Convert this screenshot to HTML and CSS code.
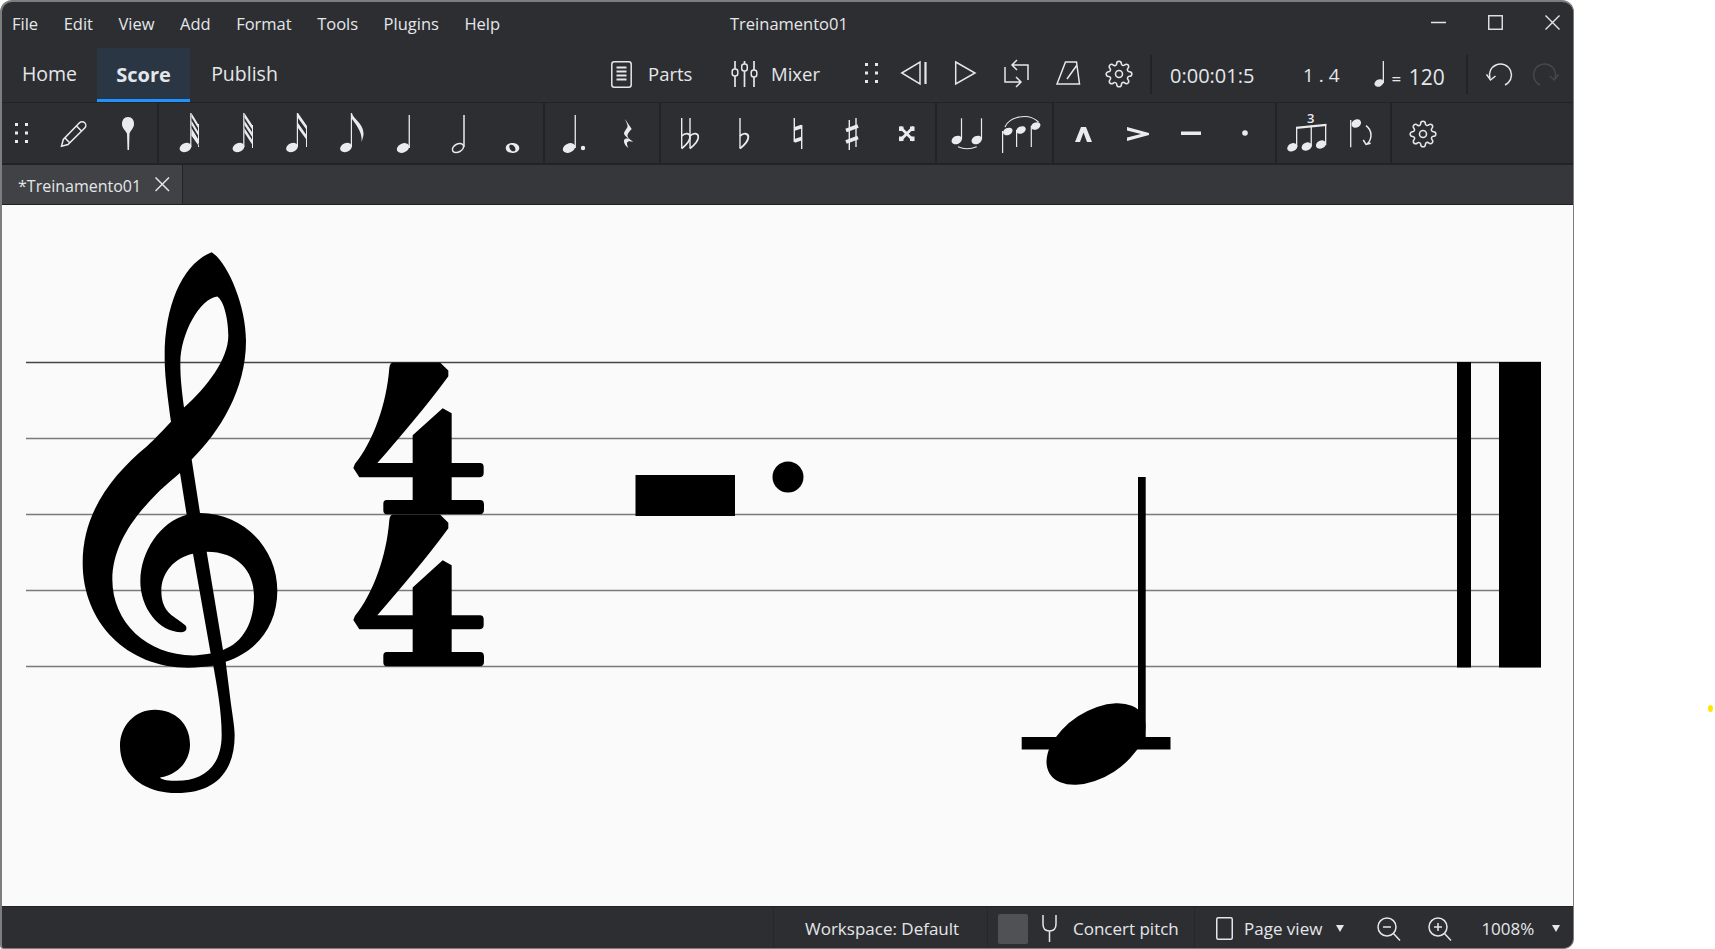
FILE: index.html
```html
<!DOCTYPE html>
<html lang="en">
<head>
<meta charset="utf-8">
<title>Treinamento01</title>
<link rel="stylesheet" href="styles.css">
</head>
<body>
<svg class="sprite" aria-hidden="true">
  <symbol id="gear" viewBox="0 0 24 24"><g fill="none" stroke="currentColor" stroke-width="1.35"><circle cx="12" cy="12" r="3"/><path d="M19.4 15a1.65 1.65 0 0 0 .33 1.82l.06.06a2 2 0 0 1 0 2.83 2 2 0 0 1-2.83 0l-.06-.06a1.65 1.65 0 0 0-1.82-.33 1.65 1.65 0 0 0-1 1.51V21a2 2 0 0 1-2 2 2 2 0 0 1-2-2v-.09A1.65 1.65 0 0 0 9 19.4a1.65 1.65 0 0 0-1.82.33l-.06.06a2 2 0 0 1-2.83 0 2 2 0 0 1 0-2.83l.06-.06a1.65 1.65 0 0 0 .33-1.82 1.65 1.65 0 0 0-1.51-1H3a2 2 0 0 1-2-2 2 2 0 0 1 2-2h.09A1.65 1.65 0 0 0 4.6 9a1.65 1.65 0 0 0-.33-1.82l-.06-.06a2 2 0 0 1 0-2.83 2 2 0 0 1 2.83 0l.06.06a1.65 1.65 0 0 0 1.82.33H9a1.65 1.65 0 0 0 1-1.51V3a2 2 0 0 1 2-2 2 2 0 0 1 2 2v.09a1.65 1.65 0 0 0 1 1.51 1.65 1.65 0 0 0 1.82-.33l.06-.06a2 2 0 0 1 2.83 0 2 2 0 0 1 0 2.83l-.06.06a1.65 1.65 0 0 0-.33 1.82V9a1.65 1.65 0 0 0 1.51 1H21a2 2 0 0 1 2 2 2 2 0 0 1-2 2h-.09a1.65 1.65 0 0 0-1.51 1z"/></g></symbol>
  <symbol id="dots" viewBox="0 0 14 22"><path d="M0 0h3v3H0zM10 0h3v3h-3zM0 8.500h3v3H0zM10 8.500h3v3h-3zM0 17h3v3H0zM10 17h3v3h-3z"/></symbol>
</svg>

<div class="window">
  <header class="titlebar">
    <nav class="menu"><span>File</span><span>Edit</span><span>View</span><span>Add</span><span>Format</span><span>Tools</span><span>Plugins</span><span>Help</span></nav>
    <div class="doc-title">Treinamento01</div>
    <div class="winctl">
      <svg class="winbtn" viewBox="0 0 15 15"><path d="M0 7.500h15" /></svg>
      <svg class="winbtn" viewBox="0 0 15 15"><rect x=".75" y=".75" width="13.500" height="13.500"/></svg>
      <svg class="winbtn" viewBox="0 0 15 15"><path d="M.5 .5l14 14M14.500 .5l-14 14"/></svg>
    </div>
  </header>

  <div class="mainbar">
    <div class="tab">Home</div>
    <div class="tab tab-on">Score</div>
    <div class="tab">Publish</div>
    <div class="mb-right">
      <div class="mb-btn parts">
        <svg class="ln ic-parts" viewBox="0 0 21 27"><rect x=".8" y=".8" width="19.400" height="25.400" rx="2.500"/><path d="M5.500 6.500h10M5.500 10.500h10M5.500 14.500h10M5.500 18.500h10" stroke-width="1.800"/></svg>
        <span>Parts</span>
      </div>
      <div class="mb-btn mixer">
        <svg class="ln ic-mixer" viewBox="0 0 27 26"><path d="M4 0v8M4 15v11M13.500 0v3M13.500 10v16M23 0v9M23 16v10" stroke-width="1.700"/><rect x="1.200" y="8" width="5.600" height="7" rx="2.500"/><rect x="10.700" y="3" width="5.600" height="7" rx="2.500"/><rect x="20.200" y="9" width="5.600" height="7" rx="2.500"/></svg>
        <span>Mixer</span>
      </div>
      <svg class="fl ic-handle" viewBox="0 0 14 22"><use href="#dots"/></svg>
      <svg class="ln cell" viewBox="0 0 51 54"><path d="M12.800 26L31 15v22z"/><path d="M36.500 15v22" stroke-width="2.200"/></svg>
      <svg class="ln cell" viewBox="0 0 51 54"><path d="M15.700 15L35 26 15.700 37z"/></svg>
      <svg class="ln cell" viewBox="0 0 51 54"><path d="M22 18h15v15M26 13l-5 5 5 5M14 20v15h15M25 30l5 5-5 5"/></svg>
      <svg class="ln cell" viewBox="0 0 51 54"><path d="M15 37l8.500-22h11l3 22zM25 32l10-14"/></svg>
      <div class="cell gear-cell"><svg class="ic-gear"><use href="#gear"/></svg></div>
      <i class="vsep sep-a"></i>
      <span class="time">0:00:01:5</span>
      <span class="bar">1 . 4</span>
      <svg class="fl ic-tempo" viewBox="0 0 11 26"><ellipse cx="5" cy="22" rx="4.700" ry="3.500" transform="rotate(-25 5 22)"/><rect x="8.700" y="0" width="1.300" height="22"/></svg>
      <span class="tempo"><small class="eq">=</small> 120</span>
      <i class="vsep sep-b"></i>
      <svg class="ln ic-undo" viewBox="0 0 28 24"><path d="M4 16.500A11 11 0 1 1 19 23"/><path d="M.5 12.500L4.500 18l5-4"/></svg>
      <svg class="ln ic-undo ic-redo" viewBox="0 0 28 24"><path d="M24 16.500A11 11 0 1 0 9 23"/><path d="M27.500 12.500L23.500 18l-5-4"/></svg>
    </div>
  </div>

  <div class="toolbar">
    <div class="sec s1">
      <div class="t-handle"><svg class="fl ic-handle" viewBox="0 0 14 22"><use href="#dots"/></svg></div>
      <svg class="ln tb" viewBox="0 0 54 60"><path d="M30.500 19.800a3.600 3.600 0 1 1 5.200 5.200L19 41.500l-6.500 1.800 1.800-6.800zM16 35l5 5M27.500 23l5 5"/></svg>
      <svg class="fl tb" viewBox="0 0 54 60"><path d="M25 14c4 0 6 3 6 7 0 4-3 6-4.500 9.500L26 47h-1.500L24 30.500C22 27 19 25 19 21c0-4 2-7 6-7z"/></svg>
    </div>
    <div class="sec s2a">
      <svg class="fl tb" viewBox="0 0 54 60"><ellipse cx="24.500" cy="44.500" rx="6.200" ry="4.300" transform="rotate(-25 24.500 44.500)"/><rect x="29.200" y="10" width="1.200" height="34"/><path d="M30.400 10l7 11.500v4l-7-11.500zM30.400 17.500l7 11.500v4l-7-11.500zM30.400 25l7 11.500v4l-7-11.500zM30.400 32.500l7 10v-2l-7-11.500zM37 21h1v23h-1z"/></svg>
      <svg class="fl tb" viewBox="0 0 54 60"><ellipse cx="23.500" cy="44.500" rx="6.200" ry="4.300" transform="rotate(-25 23.500 44.500)"/><rect x="28.200" y="10" width="1.200" height="34"/><path d="M29.400 10l7.800 12v4.500l-7.800-12zM29.400 17.500l7.800 12v4.500l-7.800-12zM29.400 25l7.800 12v4.500l-7.800-12zM37 22h1v23h-1z"/></svg>
      <svg class="fl tb" viewBox="0 0 54 60"><ellipse cx="23" cy="44.500" rx="6.200" ry="4.300" transform="rotate(-25 23 44.500)"/><rect x="27.800" y="10" width="1.200" height="34"/><path d="M29 10l9 13v21h-1V26l-8-11zM29 20l8 11.500v4.500l-8-11z"/></svg>
      <svg class="fl tb" viewBox="0 0 54 60"><ellipse cx="23" cy="44.500" rx="6.200" ry="4.300" transform="rotate(-25 23 44.500)"/><rect x="27.800" y="10" width="1.200" height="34"/><path d="M29 10C30 16 40 20 40.500 30 40.700 33 39.500 36 38.500 39 39.500 31 35 24 29 16z"/></svg>
      <svg class="fl tb" viewBox="0 0 54 60"><ellipse cx="26" cy="45" rx="6.500" ry="4.500" transform="rotate(-25 26 45)"/><rect x="31.600" y="12" width="1.300" height="33"/></svg>
      <svg class="tb half" viewBox="0 0 54 60"><ellipse cx="27" cy="45" rx="6" ry="4" transform="rotate(-28 27 45)"/><path d="M33 12v32"/></svg>
      <svg class="fl tb" viewBox="0 0 54 60"><path fill-rule="evenodd" d="M27.500 40c4 0 6.800 2.200 6.800 5s-2.800 5-6.800 5-6.800-2.200-6.800-5 2.800-5 6.800-5zM25.500 41.800c-1.400.4-1.500 2-.8 3.600.8 1.800 2.500 3.300 4.500 2.800 1.400-.4 1.500-2 .8-3.600-.8-1.800-2.500-3.300-4.500-2.800z"/></svg>
    </div>
    <div class="sec s2b">
      <svg class="fl tb" viewBox="0 0 54 60"><ellipse cx="22" cy="45" rx="6.500" ry="4.500" transform="rotate(-25 22 45)"/><rect x="27.600" y="12" width="1.300" height="33"/><circle cx="36" cy="45" r="2.200"/></svg>
      <svg class="fl tb" viewBox="0 0 54 60"><path d="M24 16L30.700 26C28 29 26 31 26.500 33 27 35.500 30 37 32.300 39 29 38 26.500 38 26 40 26 42 26.500 43.500 27.500 45 25 43.500 22.500 40 23 37.500 23.500 35.500 26 35 28 36 26 34.500 23 32 23 30.300 23.500 27.500 27 25 26.500 22.500 26 20 24.500 18 24 16z"/></svg>
    </div>
    <div class="sec s3">
      <svg class="tb acc" viewBox="0 0 54 60"><path d="M20.700 15v30.500M29 15v30.500"/><path d="M20.700 33c3.500-3.500 8.300-3 8.300 1 0 4.500-4.500 8.500-8.300 11.500M29 33c3.500-3.500 8.300-3 8.300 1 0 4.500-4.500 8.500-8.300 11.500" stroke-width="1.700"/></svg>
      <svg class="tb acc" viewBox="0 0 54 60"><path d="M25 15v30.500"/><path d="M25 33c3.500-3.500 8.300-3 8.300 1 0 4.500-4.500 8.500-8.300 11.500" stroke-width="1.900"/></svg>
      <svg class="tb acc" viewBox="0 0 54 60"><path d="M25.300 15v24M32.700 22v24"/><path d="M25.300 26l7.400-2.500M25.300 38l7.400-2.500" stroke-width="3.500"/></svg>
      <svg class="tb acc" viewBox="0 0 54 60"><path d="M26.300 17v30M33 15v29"/><path d="M23 27.500L35 23M23 39l12-4.500" stroke-width="3.800"/></svg>
      <svg class="tb acc" viewBox="0 0 54 60"><path d="M24 25l11.500 11.500M35.500 25L24 36.500" stroke-width="2.800" stroke-linecap="square"/><path class="fl" d="M22 23.500h4.500v4.500H22zM33 23.500h4.500v4.500H33zM22 33.500h4.500V38H22zM33 33.500h4.500V38H33z"/></svg>
    </div>
    <div class="sec s4">
      <svg class="fl tb" viewBox="0 0 54 60"><ellipse cx="17.700" cy="37" rx="5.400" ry="4" transform="rotate(-25 17.700 37)"/><ellipse cx="37.700" cy="37" rx="5.400" ry="4" transform="rotate(-25 37.700 37)"/><rect x="21.900" y="15.300" width="1.200" height="21"/><rect x="41.900" y="15.300" width="1.200" height="21"/><path class="tie" d="M19 43.700Q28 47.800 37.700 43.700"/></svg>
      <svg class="fl tb" viewBox="0 0 54 60"><ellipse cx="14.800" cy="28.500" rx="5" ry="3.500" transform="rotate(-25 14.800 28.500)"/><ellipse cx="28" cy="27" rx="5" ry="3.500" transform="rotate(-25 28 27)"/><ellipse cx="42.700" cy="23" rx="5" ry="3.500" transform="rotate(-25 42.700 23)"/><rect x="9" y="28" width="1.200" height="22"/><rect x="23" y="27" width="1.200" height="17"/><rect x="37.700" y="23" width="1.200" height="21"/><path class="tie" d="M12 24C16 14 35 9 45.500 19"/></svg>
    </div>
    <div class="sec s5">
      <svg class="fl tb" viewBox="0 0 54 60"><path d="M19 39l6-15h5l6 15h-5l-3.500-9.500L24 39z"/></svg>
      <svg class="fl tb" viewBox="0 0 54 60"><path d="M17 24l22 6v2l-22 6v-3.500L31 31l-14-3.500z"/></svg>
      <svg class="fl tb" viewBox="0 0 54 60"><rect x="17" y="28.500" width="20" height="3.500"/></svg>
      <svg class="fl tb" viewBox="0 0 54 60"><circle cx="27" cy="30" r="2.800"/></svg>
    </div>
    <div class="sec s6">
      <svg class="fl tb" viewBox="0 0 54 60"><ellipse cx="13.300" cy="44.300" rx="5.300" ry="3.900" transform="rotate(-25 13.300 44.300)"/><ellipse cx="27.700" cy="43.500" rx="5.300" ry="3.900" transform="rotate(-25 27.700 43.500)"/><ellipse cx="42" cy="41.500" rx="5.300" ry="3.900" transform="rotate(-25 42 41.500)"/><rect x="17" y="24" width="1.300" height="20"/><rect x="31.600" y="22.500" width="1.300" height="21"/><rect x="46" y="21" width="1.300" height="21"/><path d="M17 23.700l30.300-2.900v2.200L17 25.900z"/><text class="tup" x="31.700" y="19.500">3</text></svg>
      <svg class="tb flip" viewBox="0 0 54 60"><path d="M17.700 17v27.300" stroke-width="1.300"/><ellipse class="fl" cx="23.300" cy="20.500" rx="5" ry="4" transform="rotate(-30 23.300 20.500)"/><path d="M33 22.700C39 27 40 36 33.700 41.300M30.300 37L33 41.300l4.700-1"/></svg>
    </div>
    <div class="sec s7">
      <svg class="tb-gear"><use href="#gear"/></svg>
    </div>
  </div>

  <div class="tabbar">
    <div class="doc-tab"><span>*Treinamento01</span>
      <svg class="ln ic-x" viewBox="0 0 15 15"><path d="M.5 .5l14 14M14.500 .5l-14 14"/></svg>
    </div>
  </div>

  <main class="canvas">
    <svg class="score" viewBox="2 205 1571 701">
      <g class="staff">
        <path class="l1" d="M26 362.500H1541"/>
        <path d="M26 438.500H1541M26 514.500H1541M26 590.500H1541M26 666.500H1541"/>
      </g>
      <g transform="translate(0 230) scale(.33333 .36996)">
        <path id="clef" fill-rule="evenodd" d="M635 60C680 85 738 200 738 300C738 430 660 545 575 620L600 765C730 765 832 860 832 975C832 1070 770 1140 677 1167L690 1260C695 1300 704 1340 704 1365C704 1470 640 1522 530 1522C430 1522 360 1470 360 1395C360 1340 405 1297 465 1297C525 1297 570 1335 570 1390C570 1435 535 1472 480 1480C485 1487 510 1489 530 1489C610 1489 665 1450 665 1365C665 1300 650 1230 640 1178C615 1181 590 1183 565 1183C380 1183 248 1060 248 900C248 760 340 660 440 585C470 560 495 535 513 518C500 430 494 390 494 340C494 200 550 90 635 60ZM652 180C675 195 685 250 685 285C685 350 620 425 552 480C545 430 541 400 541 360C541 280 600 185 652 180ZM540 657L560 770C480 790 421 870 421 950C421 1020 475 1087 545 1087C560 1087 563 1075 555 1068C530 1045 484 1040 484 975C484 925 525 885 579 875L632 1145C610 1148 595 1150 580 1150C440 1150 337 1060 337 945C337 830 440 730 540 657ZM620 870L669 1135C730 1115 762 1060 762 990C762 920 710 870 620 870Z"/>
        <path id="four" d="M1168 372Q1170 358 1180 358L1320 358L1345 380L1345 395C1280 475 1200 560 1132 630L1238 630L1238 555L1328 482L1355 495L1355 630L1440 630Q1451 630 1451 641L1451 657Q1451 668 1440 668L1355 668L1355 730L1440 730Q1452 730 1452 742L1452 756Q1452 768 1440 768L1160 768Q1150 768 1150 758L1150 740Q1150 730 1160 730L1238 730L1238 668L1078 668L1060 643L1065 632C1120 570 1160 470 1168 372Z"/>
        <use href="#four" y="411"/>
      </g>
      <rect x="635.500" y="475" width="99.500" height="41"/>
      <circle cx="788" cy="477" r="15.500"/>
      <rect x="1021.700" y="737" width="148.800" height="12.500"/>
      <ellipse cx="1096" cy="744" rx="55" ry="33" transform="rotate(-33 1096 744)"/>
      <rect x="1138" y="477" width="7.700" height="262"/>
      <rect x="1457" y="362" width="14" height="305.500"/>
      <rect x="1499" y="362" width="42" height="305.500"/>
    </svg>
  </main>

  <footer class="statusbar">
    <div class="st st-ws"><span>Workspace: Default</span></div>
    <div class="st st-cp"><i class="check"></i>
      <svg class="ln ic-fork" viewBox="0 0 15 27"><path d="M1 0v9c0 5 3 7 6.500 7S14 14 14 9V0M7.500 16v11"/></svg>
      <span>Concert pitch</span>
    </div>
    <div class="st st-view">
      <svg class="ln ic-page" viewBox="0 0 17 23"><rect x=".75" y=".75" width="15.500" height="21.500" rx="1.500"/></svg>
      <span>Page view</span><b class="caret caret-a"></b>
      <svg class="ln ic-zoom" viewBox="0 0 24 24"><circle cx="10" cy="10" r="9"/><path d="M16.500 16.500L23 23.500M6 10h8"/></svg>
      <svg class="ln ic-zoom ic-zin" viewBox="0 0 24 24"><circle cx="10" cy="10" r="9"/><path d="M16.500 16.500L23 23.500M6 10h8M10 6v8"/></svg>
      <span class="pct">1008%</span><b class="caret caret-b"></b>
    </div>
  </footer>
</div>
<i class="speck"></i>
</body>
</html>
```

FILE: styles.css
```css
* { box-sizing: border-box; }
html, body { margin: 0; height: 100%; }
body { background: #fff; overflow: hidden; font-family: "Open Sans", "Noto Sans", sans-serif; color: #e4e7ea; font-size: 16px; }
svg { display: block; flex: none; }
.sprite { position: absolute; width: 0; height: 0; }
.ln { fill: none; stroke: currentColor; stroke-width: 1.5; }
.fl { fill: currentColor; stroke: none; }

.window { width: 1574px; height: 949px; display: flex; flex-direction: column; border: 1px solid #7d7d7d; border-width: 2px 1px 1px 2px; border-radius: 12px 12px 10px 4px; background: #2d2e31; overflow: hidden; }

.titlebar { height: 46px; flex: none; display: flex; align-items: center; padding-bottom: 3px; font-size: 16.500px; }
.menu { display: flex; gap: 25.500px; padding-left: 10px; width: 728px; }
.doc-title { width: 116px; text-align: center; white-space: nowrap; }
.winctl { margin-left: 585px; display: flex; gap: 42px; margin-top: -2px; }
.winbtn { width: 15px; height: 15px; fill: none; stroke: currentColor; stroke-width: 1.4; overflow: visible; }

.mainbar { height: 54px; flex: none; display: flex; align-items: stretch; }
.tab { display: flex; align-items: center; justify-content: center; font-size: 19.500px; width: 95px; padding-bottom: 3px; }
.tab:nth-child(2) { width: 93px; }
.tab:nth-child(3) { width: 107px; padding-left: 2px; }
.tab-on { background: #2a3644; font-weight: 700; font-size: 20px; border-bottom: 3px solid #2093fe; padding: 1px 0 0; }
.mb-right { margin-left: 314px; display: flex; align-items: center; flex: 1; font-size: 18.500px; padding-bottom: 2px; }
.mb-btn { display: flex; align-items: center; }
.mb-btn span { margin-top: -1px; }
.parts { gap: 16px; width: 120px; }
.ic-parts { width: 21px; height: 27px; }
.mixer { gap: 13px; width: 133.500px; }
.ic-mixer { width: 27px; height: 26px; }
.ic-handle { width: 14px; height: 22px; }
.cell { width: 51px; height: 54px; }
.mb-right .ic-handle { margin-right: 10.500px; }
.gear-cell { display: flex; align-items: center; justify-content: center; }
.ic-gear { width: 28px; height: 28px; color: #e4e7ea; }
.vsep { display: block; width: 2px; height: 39px; background: #222325; flex: none; }
.sep-a { margin-left: 6px; }
.time { margin-left: 18px; width: 133px; white-space: nowrap; font-size: 20px; margin-top: 2px; }
.bar { width: 70.500px; white-space: nowrap; font-size: 19px; margin-top: 2px; }
.ic-tempo { width: 11px; height: 26px; margin-top: -1px; }
.tempo { margin-left: 7px; width: 74px; margin-top: 6px; white-space: nowrap; font-size: 21px; }
.eq { font-size: 17px; padding-right: 2px; }
.ic-undo { width: 28px; height: 24px; margin-left: 18px; }
.ic-redo { color: #45484c; margin-left: 17px; }

.toolbar { height: 61px; flex: none; display: flex; border-top: 1px solid #222325; color: #e9ebee; }
.sec { display: flex; padding-left: 2px; border-right: 2px solid #222325; flex: none; }
.tb { width: 54px; height: 60px; }
.s1 { width: 157px; padding-left: 0; }
.t-handle { width: 47px; padding: 20px 0 0 12.500px; }
.s2a { width: 386px; }
.s2b { width: 116px; }
.s3 { width: 276px; padding-left: 0; }
.s4 { width: 117px; }
.s5 { width: 223px; }
.s6 { width: 115px; }
.s7 { border-right: 0; padding: 17px 0 0 17px; flex: 1; }
.tb-gear { width: 28px; height: 28px; color: #e4e7ea; }
.half { fill: none; stroke: currentColor; stroke-width: 1.500; }
.acc { fill: none; stroke: currentColor; stroke-width: 1.400; }
.flip { fill: none; stroke: currentColor; stroke-width: 1.500; }
.flip .fl, .acc .fl { fill: currentColor; stroke: none; }
.tie { fill: none; stroke: currentColor; stroke-width: 1.100; }
.tup { font-size: 13px; text-anchor: middle; fill: currentColor; font-family: "Open Sans", sans-serif; font-weight: 600; }

.tabbar { height: 42px; flex: none; background: #36373a; border-top: 2px solid #222325; border-bottom: 1px solid #1f2022; display: flex; }
.doc-tab { width: 181px; background: #414245; border-right: 1px solid #222325; display: flex; align-items: center; padding-left: 16px; gap: 14px; }
.doc-tab span { padding-top: 2px; }
.ic-x { width: 14.500px; height: 14.500px; }

.canvas { height: 701px; flex: none; background: #fafafa; }
.score { width: 1571px; height: 701px; fill: #000; }
.staff path { fill: none; stroke: #7a7a7a; stroke-width: 1.500; }
.staff .l1 { stroke: #444; }

.statusbar { height: 42px; flex: none; display: flex; padding-left: 771px; border-top: 1px solid #222325; align-items: stretch; font-size: 17px; }
.st { display: flex; align-items: center; border-left: 1px solid #262729; padding-top: 2px; }
.st-ws { width: 214px; padding-left: 31px; }
.st-cp { width: 207px; padding-left: 10px; }
.check { width: 30px; height: 30px; background: #505154; border-radius: 2px; flex: none; }
.ic-fork { width: 15px; height: 27px; margin-left: 14px; margin-right: 16px; }
.st-view { flex: 1; padding-left: 21px; }
.ic-page { width: 17px; height: 23px; margin-right: 11px; }
.caret { display: block; width: 0; height: 0; border: 4px solid transparent; border-top: 7px solid #e4e7ea; border-bottom: 0; flex: none; }
.caret-a { margin-left: 14px; }
.ic-zoom { width: 24px; height: 24px; margin-left: 33px; }
.ic-zin { margin-left: 27px; }
.pct { margin-left: 29px; }
.caret-b { margin-left: 18px; }

.speck { position: absolute; left: 1708px; top: 705px; width: 5px; height: 7px; border-radius: 50%; background: #ffe600; }
```
